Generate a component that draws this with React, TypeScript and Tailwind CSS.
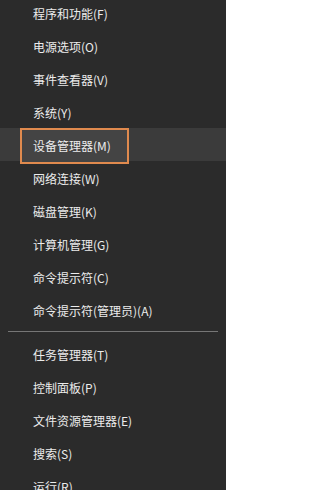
const topItems = [
  "程序和功能(F)",
  "电源选项(O)",
  "事件查看器(V)",
  "系统(Y)",
  "设备管理器(M)",
  "网络连接(W)",
  "磁盘管理(K)",
  "计算机管理(G)",
  "命令提示符(C)",
  "命令提示符(管理员)(A)",
];

const bottomItems = [
  "任务管理器(T)",
  "控制面板(P)",
  "文件资源管理器(E)",
  "搜索(S)",
  "运行(R)",
];

function MenuRow({ label, active }: { label: string; active?: boolean }) {
  return (
    <div
      className={`relative flex h-[33px] items-center pl-[33px] ${
        active ? "bg-[#3b3b3b]" : ""
      }`}
    >
      {active && (
        <div className="absolute left-[20px] top-0 h-[36px] w-[109px] border-2 border-[#e08a4e] bg-[#444444]" />
      )}
      <span className="relative pt-[3px] text-[12px] leading-none text-[#ececec]">
        {label}
      </span>
    </div>
  );
}

export default function App() {
  return (
    <div
      className="h-[490px] w-[226px] overflow-hidden bg-[#2b2b2b]"
      style={{ fontFamily: '"Noto Sans CJK SC", "Liberation Sans", sans-serif' }}
    >
      <div className="-mt-[4px] flex flex-col">
        {topItems.map((item) => (
          <MenuRow key={item} label={item} active={item === "设备管理器(M)"} />
        ))}
        <div className="flex h-[11px] items-center px-[8px]">
          <div className="h-px w-full bg-[#767676]" />
        </div>
        {bottomItems.map((item) => (
          <MenuRow key={item} label={item} />
        ))}
      </div>
    </div>
  );
}
